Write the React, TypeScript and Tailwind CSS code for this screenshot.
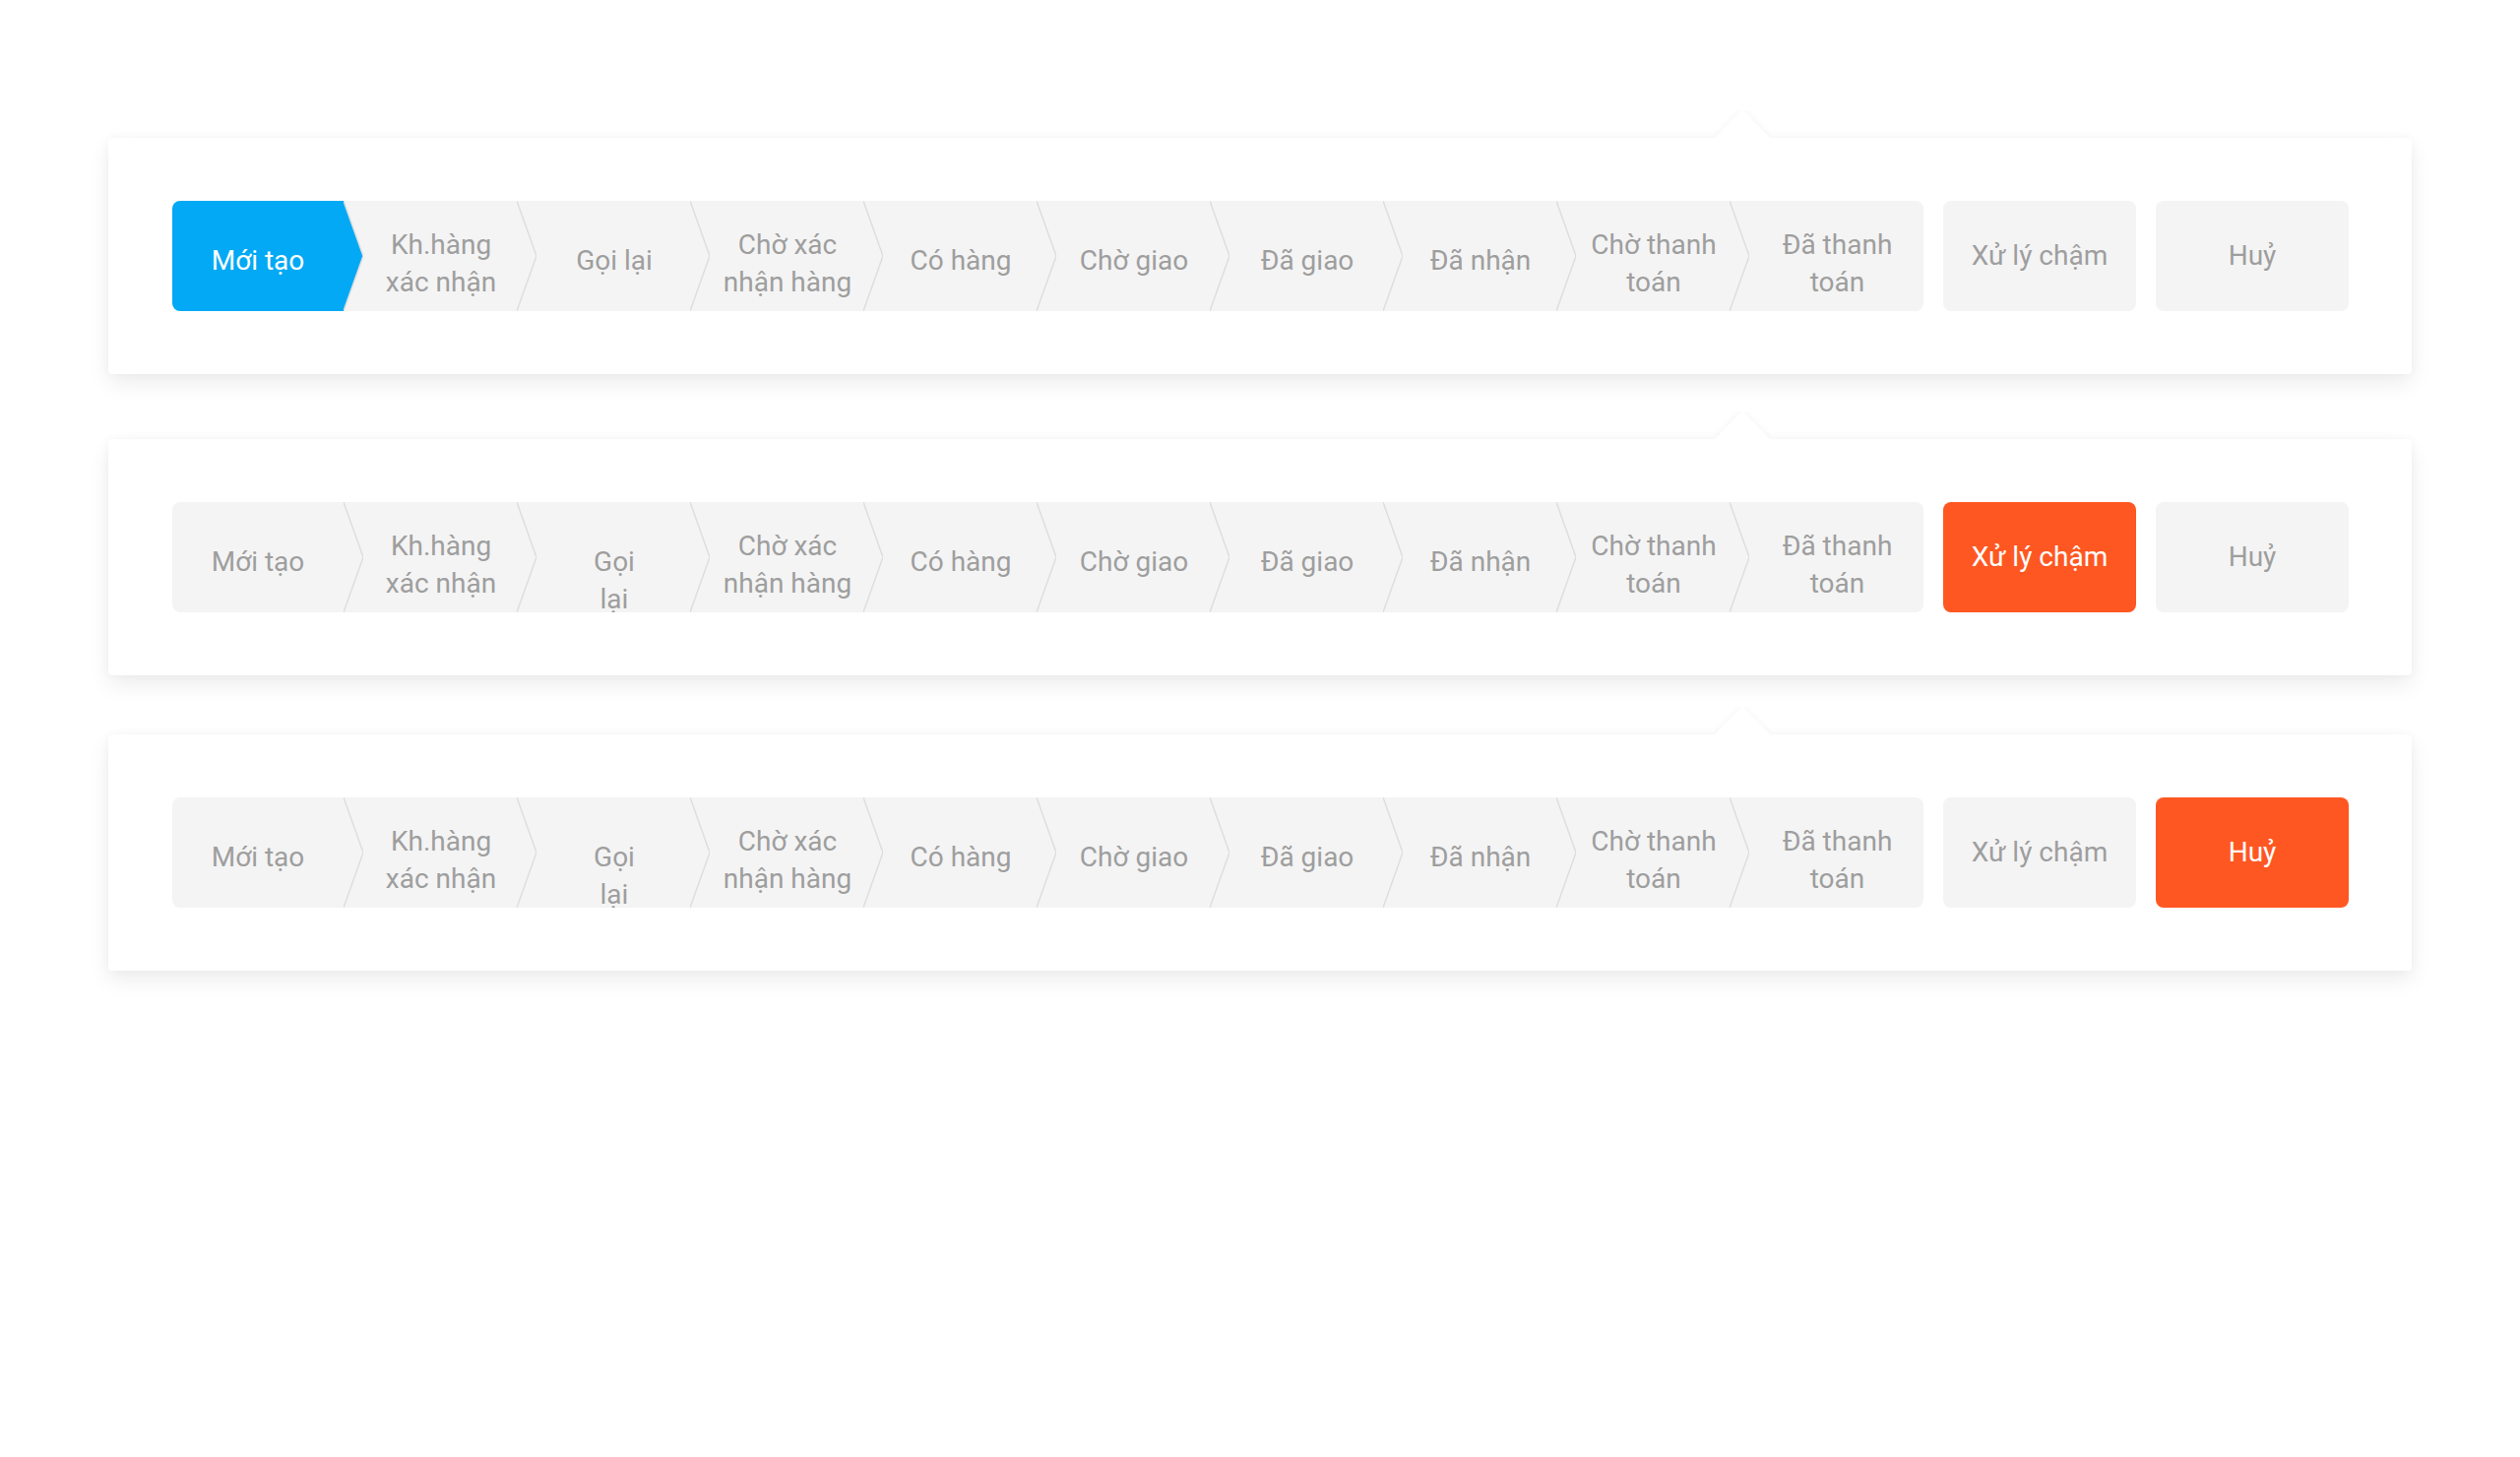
import React from "react";

type StepDef = { lines: string[] };

const STEPS: StepDef[] = [
  { lines: ["Mới tạo"] },
  { lines: ["Kh.hàng", "xác nhận"] },
  { lines: ["Gọi lại"] },
  { lines: ["Chờ xác", "nhận hàng"] },
  { lines: ["Có hàng"] },
  { lines: ["Chờ giao"] },
  { lines: ["Đã giao"] },
  { lines: ["Đã nhận"] },
  { lines: ["Chờ thanh", "toán"] },
  { lines: ["Đã thanh", "toán"] },
];

function Chevron({ active }: { active: boolean }) {
  return (
    <svg
      className="absolute top-0 right-[-20px] z-10"
      width="20"
      height="112"
      viewBox="0 0 20 112"
    >
      <polygon points="0,0 20,56 0,112" fill={active ? "#03a9f4" : "#f4f4f4"} />
      <polyline
        points="0,0 20,56 0,112"
        fill="none"
        stroke="#dedede"
        strokeWidth="1.5"
      />
    </svg>
  );
}

function Step({
  index,
  def,
  active,
  splitGoi,
}: {
  index: number;
  def: StepDef;
  active: boolean;
  splitGoi: boolean;
}) {
  const isFirst = index === 0;
  const isLast = index === STEPS.length - 1;
  const widthCls = isFirst ? "w-[174px] shrink-0" : isLast ? "flex-1 min-w-0" : "w-[176px] shrink-0";
  const padCls = isFirst ? "" : "pl-[22px]";
  const bg = active ? "bg-[#03a9f4] text-white" : "bg-[#f4f4f4] text-[#9e9e9e]";
  const multi = def.lines.length > 1;
  let content: React.ReactNode;
  if (index === 2 && splitGoi) {
    content = (
      <div className="h-[38px]">
        Gọi
        <br />
        lại
      </div>
    );
  } else {
    content = (
      <div>
        {def.lines.map((l, i) => (
          <div key={i} className="whitespace-nowrap">
            {l}
          </div>
        ))}
      </div>
    );
  }
  return (
    <div className={`relative h-[112px] ${widthCls} ${bg}`}>
      <div
        className={`flex h-full items-center justify-center text-center ${
          multi ? "pt-[16px]" : "pt-[9px]"
        } ${padCls}`}
      >
        {content}
      </div>
      {!isLast && <Chevron active={active} />}
    </div>
  );
}

function Box({ label, active }: { label: string; active: boolean }) {
  return (
    <div
      className={`flex h-[112px] w-[196px] shrink-0 items-center justify-center rounded-[8px] ${
        active ? "bg-[#ff5722] text-white" : "bg-[#f4f4f4] text-[#9e9e9e]"
      }`}
    >
      {label}
    </div>
  );
}

function Card({
  activeStep,
  activeBox,
  splitGoi,
  className,
}: {
  activeStep: number;
  activeBox: number;
  splitGoi: boolean;
  className?: string;
}) {
  return (
    <div
      className={`relative rounded-[4px] bg-white pl-[65px] pr-[64px] py-[64px] shadow-[0_10px_22px_rgba(0,0,0,0.07),0_0_10px_rgba(0,0,0,0.035)] ${
        className ?? ""
      }`}
    >
      <div className="absolute top-[-28px] left-[1632px] h-[28px] w-[56px] overflow-hidden">
        <div className="absolute top-[8px] left-[8px] h-[40px] w-[40px] rotate-45 bg-white shadow-[0_0_8px_rgba(0,0,0,0.05)]" />
      </div>
      <div className="flex items-stretch gap-[20px]">
        <div className="flex flex-1 overflow-hidden rounded-[8px]">
          {STEPS.map((s, i) => (
            <Step key={i} index={i} def={s} active={i === activeStep} splitGoi={splitGoi} />
          ))}
        </div>
        <Box label="Xử lý chậm" active={activeBox === 0} />
        <Box label="Huỷ" active={activeBox === 1} />
      </div>
    </div>
  );
}

export default function App() {
  return (
    <div
      className="min-h-[1480px] w-full bg-white px-[110px] pt-[140px] text-[28px] leading-[38px]"
      style={{ fontFamily: "Roboto, 'Noto Sans', sans-serif" }}
    >
      <Card activeStep={0} activeBox={-1} splitGoi={false} />
      <Card activeStep={-1} activeBox={0} splitGoi={true} className="mt-[66px]" />
      <Card activeStep={-1} activeBox={1} splitGoi={true} className="mt-[60px]" />
    </div>
  );
}
